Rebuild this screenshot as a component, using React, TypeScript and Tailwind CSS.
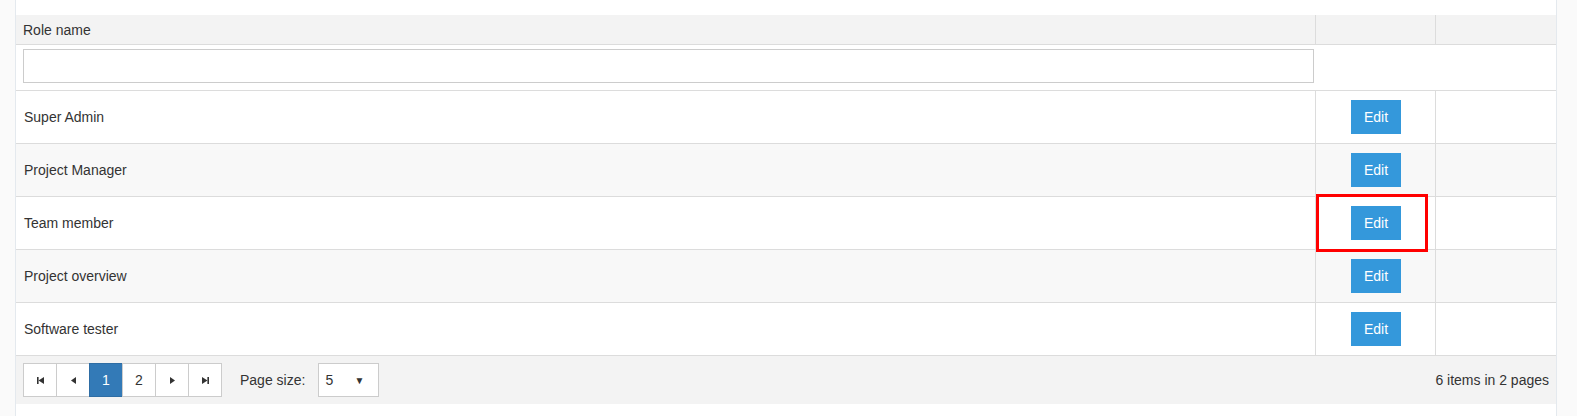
import React from 'react';

const roles = ['Super Admin', 'Project Manager', 'Team member', 'Project overview', 'Software tester'];

function PagerIcon({ kind }: { kind: 'first' | 'prev' | 'next' | 'last' }) {
    return (
        <svg width="9" height="9" viewBox="0 0 9 9" className="block">
            {kind === 'first' && (<><rect x="1" y="1" width="1.6" height="7" fill="#333" /><polygon points="8,1 8,8 2.5,4.5" fill="#333" /></>)}
            {kind === 'prev' && <polygon points="7,1 7,8 2,4.5" fill="#333" />}
            {kind === 'next' && <polygon points="2,1 2,8 7,4.5" fill="#333" />}
            {kind === 'last' && (<><rect x="6.4" y="1" width="1.6" height="7" fill="#333" /><polygon points="1,1 1,8 6.5,4.5" fill="#333" /></>)}
        </svg>
    );
}

export default function App() {
    return (
        <div className="flex h-[416px] w-[1577px] overflow-hidden bg-white text-[14px] text-[#333]" style={{ fontFamily: '"Liberation Sans", Arial, sans-serif' }}>
            {/* left gutter */}
            <div className="w-[16px] shrink-0 bg-[#fafafa] border-r border-[#e4e9ee]" />

            {/* grid */}
            <div className="flex-1 pt-[15px]">
                {/* header */}
                <div className="flex h-[30px] bg-[#f3f3f3] border-b border-[#dcdcdc]">
                    <div className="w-[1300px] shrink-0 pl-[7px] pt-[2px] flex items-center border-r border-[#dcdcdc]">Role name</div>
                    <div className="w-[120px] shrink-0 border-r border-[#dcdcdc]" />
                    <div className="flex-1" />
                </div>

                {/* filter row */}
                <div className="flex h-[46px] border-b border-[#dcdcdc]">
                    <div className="w-[1300px] shrink-0 pl-[7px] pr-[2px] pt-[4px]">
                        <input className="w-full h-[34px] border border-[#ccc] bg-white outline-none" />
                    </div>
                </div>

                {/* rows */}
                {roles.map((name, i) => (
                    <div key={name} className={`flex h-[53px] border-b border-[#dcdcdc] ${i % 2 === 1 ? 'bg-[#f8f8f8]' : 'bg-white'}`}>
                        <div className="w-[1300px] shrink-0 pl-[8px] flex items-center border-r border-[#dcdcdc]">{name}</div>
                        <div className="relative w-[120px] shrink-0 flex items-center justify-center border-r border-[#dcdcdc]">
                            <button className="w-[50px] h-[34px] bg-[#3498db] text-white text-[14px] ml-[1px]">Edit</button>
                            {i === 2 && (
                                <div className="absolute left-0 top-[-3px] w-[112px] h-[58px] border-[3px] border-[#ff0000] pointer-events-none" />
                            )}
                        </div>
                        <div className="flex-1" />
                    </div>
                ))}

                {/* pager */}
                <div className="flex h-[48px] items-center justify-between bg-[#f3f3f3] pl-[7px] pr-[7px]">
                    <div className="flex items-center">
                        <div className="flex h-[34px]">
                            <div className="w-[34px] flex items-center justify-center border border-[#ccc] bg-white"><PagerIcon kind="first" /></div>
                            <div className="w-[34px] -ml-px flex items-center justify-center border border-[#ccc] bg-white"><PagerIcon kind="prev" /></div>
                            <div className="w-[34px] -ml-px flex items-center justify-center border border-[#2e6da4] bg-[#337ab7] text-white">1</div>
                            <div className="w-[34px] -ml-px flex items-center justify-center border border-[#ccc] bg-white">2</div>
                            <div className="w-[34px] -ml-px flex items-center justify-center border border-[#ccc] bg-white"><PagerIcon kind="next" /></div>
                            <div className="w-[34px] -ml-px flex items-center justify-center border border-[#ccc] bg-white"><PagerIcon kind="last" /></div>
                        </div>
                        <span className="ml-[18px]">Page size:</span>
                        <div className="ml-[13px] w-[61px] h-[34px] flex items-center justify-between border border-[#ccc] bg-white pl-[6px] pr-[14px]">
                            <span>5</span>
                            <span className="text-[10px]">▼</span>
                        </div>
                    </div>
                    <span>6 items in 2 pages</span>
                </div>
            </div>

            {/* right gutter */}
            <div className="w-[21px] shrink-0 bg-[#fafafa] border-l border-[#e4e9ee]" />
        </div>
    );
}
